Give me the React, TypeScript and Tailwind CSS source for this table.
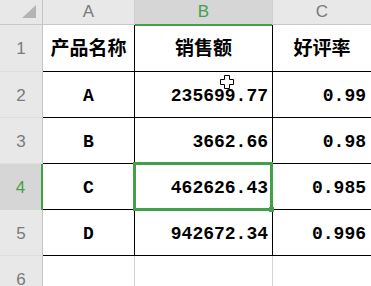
const rows = [
  { n: "2", name: "A", sales: "235699.77", rate: "0.99" },
  { n: "3", name: "B", sales: "3662.66", rate: "0.98" },
  { n: "4", name: "C", sales: "462626.43", rate: "0.985", active: true },
  { n: "5", name: "D", sales: "942672.34", rate: "0.996" },
];

const head = "font-['Liberation_Sans',Arial,sans-serif] text-[17px] text-[#7a7a7a]";
const cjk = "font-['Liberation_Serif','Noto_Sans_CJK_SC',serif] text-[19px] font-bold text-black";
const mono = "font-['Liberation_Mono','Noto_Sans_CJK_SC',monospace] text-[18px] font-bold text-black";

function RowHead({ n, active }: { n: string; active?: boolean }) {
  return (
    <div
      className={`flex w-[43px] shrink-0 items-center justify-center pt-[2px] ${head} ${
        active
          ? "border-r-2 border-[#44a048] bg-[#d6d6d6] text-[#44a048]"
          : "border-r border-b border-r-[#c4c4c4] border-b-[#dedede] bg-[#e8e8e8]"
      }`}
    >
      {n}
    </div>
  );
}

export default function App() {
  return (
    <div className="relative h-[286px] w-[371px] overflow-hidden bg-white">
      {/* column headers */}
      <div className="flex h-[25px] border-b border-[#c8c8c8] bg-[#e8e8e8]">
        <div className="relative w-[43px] shrink-0 border-r border-[#c4c4c4]">
          <svg className="absolute left-0 top-0" width="42" height="24">
            <polygon points="22,18 36,18 36,5" fill="#b4b4b4" />
          </svg>
        </div>
        <div className={`flex w-[92px] shrink-0 items-center justify-center border-r border-[#d0d0d0] ${head}`}>A</div>
        <div className={`relative flex w-[138px] shrink-0 items-center justify-center border-r border-[#d0d0d0] bg-[#d6d6d6] ${head} text-[#44a048]`}>
          B
          <div className="absolute -bottom-[2px] left-0 right-0 z-10 h-[2px] bg-[#44a048]" />
        </div>
        <div className={`flex flex-1 items-center justify-center ${head}`}>C</div>
      </div>

      {/* row 1 */}
      <div className="flex h-[47px]">
        <RowHead n="1" />
        <div className={`flex w-[92px] shrink-0 items-center justify-center border-r border-b border-black pt-[3px] ${cjk}`}>产品名称</div>
        <div className={`flex w-[138px] shrink-0 items-center justify-center border-r border-b border-black pt-[3px] ${cjk}`}>销售额</div>
        <div className={`flex flex-1 items-center justify-center border-b border-black pt-[3px] ${cjk}`}>好评率</div>
      </div>

      {rows.map((r) => (
        <div key={r.n} className="flex h-[46px]">
          <RowHead n={r.n} active={r.active} />
          <div className={`flex w-[92px] shrink-0 items-center justify-center border-r border-b border-black pt-[3px] ${mono}`}>{r.name}</div>
          <div className={`flex w-[138px] shrink-0 items-center justify-end border-r border-b border-black pr-[4px] pt-[3px] ${mono}`}>{r.sales}</div>
          <div className={`flex flex-1 items-center justify-end border-b border-black pr-[5px] pt-[3px] ${mono}`}>{r.rate}</div>
        </div>
      ))}

      {/* row 6 */}
      <div className="flex h-[46px]">
        <RowHead n="6" />
        <div className="w-[92px] shrink-0 border-r border-[#d4d4d4]" />
        <div className="w-[138px] shrink-0 border-r border-[#d4d4d4]" />
        <div className="flex-1" />
      </div>

      {/* selection on B4 */}
      <div className="absolute left-[133px] top-[162px] h-[49px] w-[140px] border-[3px] border-[#44a048]" />
      <div className="absolute left-[269px] top-[207px] h-[5px] w-[5px] bg-[#44a048]" />

      {/* cell cursor */}
      <svg className="absolute left-[220px] top-[75px]" width="14" height="14" viewBox="0 0 14 14">
        <path
          d="M4.5 0.5h5v4h4v5h-4v4h-5v-4h-4v-5h4z"
          fill="white"
          stroke="black"
          strokeWidth="1"
        />
      </svg>
    </div>
  );
}
